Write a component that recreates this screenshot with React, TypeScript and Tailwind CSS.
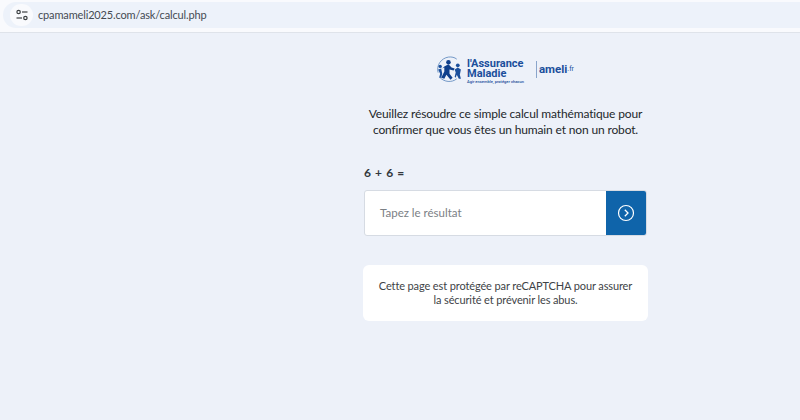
function LogoMark() {
  return (
    <svg width="29" height="29" viewBox="0 0 28 28" fill="none">
      <path d="M3 17C1 10 6 3 13 2c3-.4 6 .3 8 2" stroke="#5b86bd" strokeWidth="0.8" />
      <path d="M5 22c4 4 11 5 16 1" stroke="#5b86bd" strokeWidth="0.8" />
      <circle cx="5" cy="11" r="1.6" fill="#1b4f9c" />
      <path d="M3 14l3-1 1 5-1 4-2 0 1-4z" fill="#1b4f9c" />
      <circle cx="13" cy="7" r="2.2" fill="#0f3f8c" />
      <path d="M9 11l4-2 3 3 3 1-1 2-4-1 0 4 3 4-2 2-4-5-2 4-3-1 3-6 0-4-2 1z" fill="#0f3f8c" />
      <circle cx="22" cy="10" r="1.8" fill="#1b4f9c" />
      <path d="M19 14l3-2 3 2-1 5 1 4-2 0-2-4-1 3-1-1 1-4z" fill="#1b4f9c" />
    </svg>
  )
}

function TuneIcon() {
  return (
    <svg width="12" height="12" viewBox="0 0 12 12" fill="none" stroke="#3c4043" strokeWidth="1.2">
      <circle cx="2.6" cy="3" r="1.7" />
      <path d="M6 3h5.5" />
      <path d="M0.5 9H6" />
      <circle cx="9.4" cy="9" r="1.7" />
    </svg>
  )
}

export default function App() {
  return (
    <div className="h-[420px] w-[800px] overflow-hidden bg-[#edf1f9] font-['Lato',sans-serif]">
      {/* Browser bar */}
      <div className="h-[33px] border-b border-[#dfe3ea] bg-[#f9fafd] pt-[2px]">
        <div className="ml-[3px] flex h-[26px] items-center rounded-l-full bg-[#edf2fa] pl-[7px]">
          <div className="flex h-[22px] w-[23px] items-center justify-center rounded-full bg-[#f9fafd]">
            <TuneIcon />
          </div>
          <span className="ml-[5px] text-[11px] tracking-[-0.15px] text-[#444a52]">cpamameli2025.com/ask/calcul.php</span>
        </div>
      </div>

      {/* Main column */}
      <div className="ml-[363px] flex w-[285px] flex-col">
        <div className="mt-[22px] flex h-[29px] items-center pl-[72px] font-['Roboto',sans-serif]">
          <LogoMark />
          <div className="ml-[3px] flex flex-col pt-[2px] text-[#1b4f9c]">
            <span className="text-[11px] leading-[11px] font-bold">l'Assurance</span>
            <span className="text-[11px] leading-[10px] font-bold">Maladie</span>
            <span className="text-[4px] leading-[5px] font-medium">Agir ensemble, protéger chacun</span>
          </div>
          <div className="mr-[2px] ml-[12px] h-[17px] w-px bg-[#8aa5cb]" />
          <span className="text-[11.5px] font-bold text-[#1b4f9c]">ameli</span>
          <span className="text-[7px] text-[#1b4f9c]">.fr</span>
        </div>

        <p className="mt-[22px] whitespace-nowrap text-center text-[12px] leading-[16px] tracking-[-0.15px] text-[#23272b]">
          Veuillez résoudre ce simple calcul mathématique pour
          <br />
          confirmer que vous êtes un humain et non un robot.
        </p>

        <label className="mt-[27px] ml-px text-[12px] leading-[16px] font-bold tracking-[0.6px] text-[#33383d]">6 + 6 =</label>

        <div className="mt-[9px] ml-px flex h-[46px] w-[283px] overflow-hidden rounded-[3px] border border-[#d6dbe3] bg-white">
          <div className="flex flex-1 items-center pl-[15px] text-[11.5px] text-[#7b8085]">Tapez le résultat</div>
          <div className="-my-px -mr-px flex w-[41px] items-center justify-center bg-[#0f64aa] pr-px">
            <svg width="18" height="18" viewBox="0 0 18 18" fill="none" stroke="white">
              <circle cx="9" cy="9" r="7.5" strokeWidth="1.2" />
              <path d="M7.8 5.8 11 9l-3.2 3.2" strokeWidth="1.3" />
            </svg>
          </div>
        </div>

        <div className="mt-[29px] whitespace-nowrap rounded-[6px] bg-white pt-[14px] pb-[14px] text-center text-[11px] leading-[14px] tracking-[-0.12px] text-[#3e4347]">
          Cette page est protégée par reCAPTCHA pour assurer
          <br />
          la sécurité et prévenir les abus.
        </div>
      </div>
    </div>
  )
}
